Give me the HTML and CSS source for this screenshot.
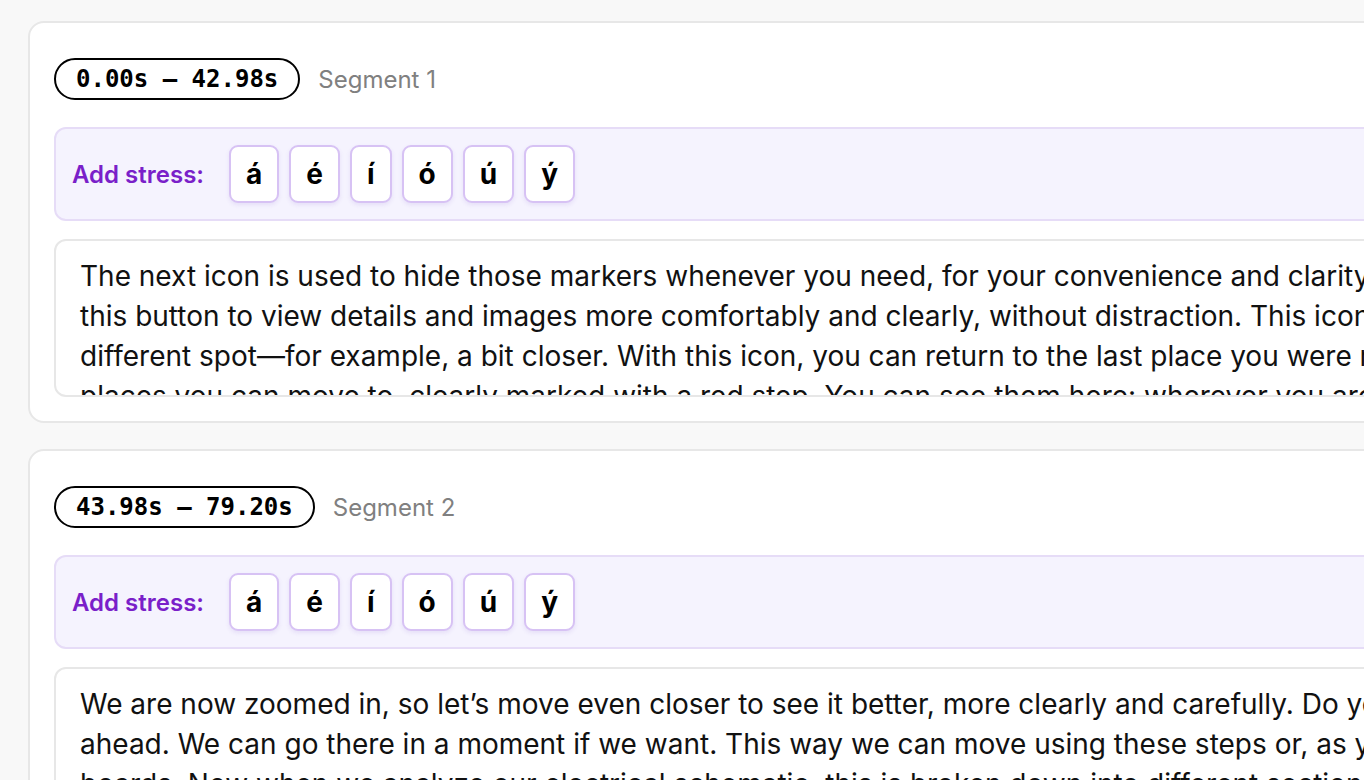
FILE: index.html
```html
<!DOCTYPE html>
<html lang="en">
<head>
  <meta charset="UTF-8">
  <title>Transcript segments</title>
  <link rel="stylesheet" href="styles.css">
</head>
<body>
  <div id="segments">
    <section class="segment">
      <div class="segment-head">
        <span class="time-pill">0.00s – 42.98s</span>
        <span class="segment-name">Segment 1</span>
      </div>
      <div class="stress-bar">
        <span class="stress-label">Add stress:</span>
        <button class="stress-key">á</button>
        <button class="stress-key">é</button>
        <button class="stress-key">í</button>
        <button class="stress-key">ó</button>
        <button class="stress-key">ú</button>
        <button class="stress-key">ý</button>
      </div>
      <textarea class="segment-text" wrap="off" spellcheck="false">The next icon is used to hide those markers whenever you need, for your convenience and clarity. Use
this button to view details and images more comfortably and clearly, without distraction. This icon takes you to a
different spot—for example, a bit closer. With this icon, you can return to the last place you were moving from.
places you can move to, clearly marked with a red step. You can see them here: wherever you are, just click.</textarea>
    </section>

    <section class="segment">
      <div class="segment-head">
        <span class="time-pill">43.98s – 79.20s</span>
        <span class="segment-name">Segment 2</span>
      </div>
      <div class="stress-bar">
        <span class="stress-label">Add stress:</span>
        <button class="stress-key">á</button>
        <button class="stress-key">é</button>
        <button class="stress-key">í</button>
        <button class="stress-key">ó</button>
        <button class="stress-key">ú</button>
        <button class="stress-key">ý</button>
      </div>
      <textarea class="segment-text" wrap="off" spellcheck="false">We are now zoomed in, so let’s move even closer to see it better, more clearly and carefully. Do you see it
ahead. We can go there in a moment if we want. This way we can move using these steps or, as you like,
boards. Now when we analyze our electrical schematic, this is broken down into different sections.</textarea>
    </section>
  </div>
</body>
</html>
```

FILE: styles.css
```css
html, body {
  margin: 0;
  padding: 0;
  overflow: hidden;
}
body {
  background: #f8f8f8;
  font-family: Inter, "Noto Sans", sans-serif;
  color: #111;
}
#segments {
  width: 1600px;
  padding: 21px 0 0 28px;
  display: flex;
  flex-direction: column;
  gap: 26px;
}
.segment {
  background: #fff;
  border: 2px solid #e7e7e7;
  border-radius: 16px;
  padding: 35px 24px 24px;
  display: flex;
  flex-direction: column;
}
.segment-head {
  display: flex;
  align-items: center;
  gap: 18px;
}
.time-pill {
  font-family: "DejaVu Sans Mono", "Liberation Mono", monospace;
  font-weight: bold;
  font-size: 24px;
  border: 2px solid #000;
  border-radius: 999px;
  height: 38px;
  line-height: 38px;
  padding: 0 20px;
  color: #000;
}
.segment-name {
  font-size: 24px;
  color: #808080;
}
.stress-bar {
  margin-top: 27px;
  background: #f5f3fe;
  border: 2px solid #e6dcf7;
  border-radius: 12px;
  padding: 16px 16px;
  display: flex;
  align-items: center;
  gap: 10px;
}
.stress-label {
  font-size: 24px;
  font-weight: 600;
  color: #7a1fc9;
  margin-right: 15px;
}
.stress-key {
  font-family: Inter, "Noto Sans", sans-serif;
  font-size: 28px;
  font-weight: 700;
  color: #000;
  background: #fff;
  border: 2px solid #d7c2f4;
  border-radius: 9px;
  height: 58px;
  padding: 0 15px;
  box-shadow: 0 2px 4px rgba(120, 80, 200, 0.12);
  cursor: pointer;
}
.segment-text {
  margin-top: 18px;
  font-family: Inter, "Noto Sans", sans-serif;
  font-size: 28px;
  line-height: 40px;
  color: #111;
  border: 2px solid #e7e7e7;
  border-radius: 12px;
  padding: 15px 24px;
  height: 124px;
  resize: none;
  overflow: hidden;
  outline: none;
  box-sizing: content-box;
}
```
